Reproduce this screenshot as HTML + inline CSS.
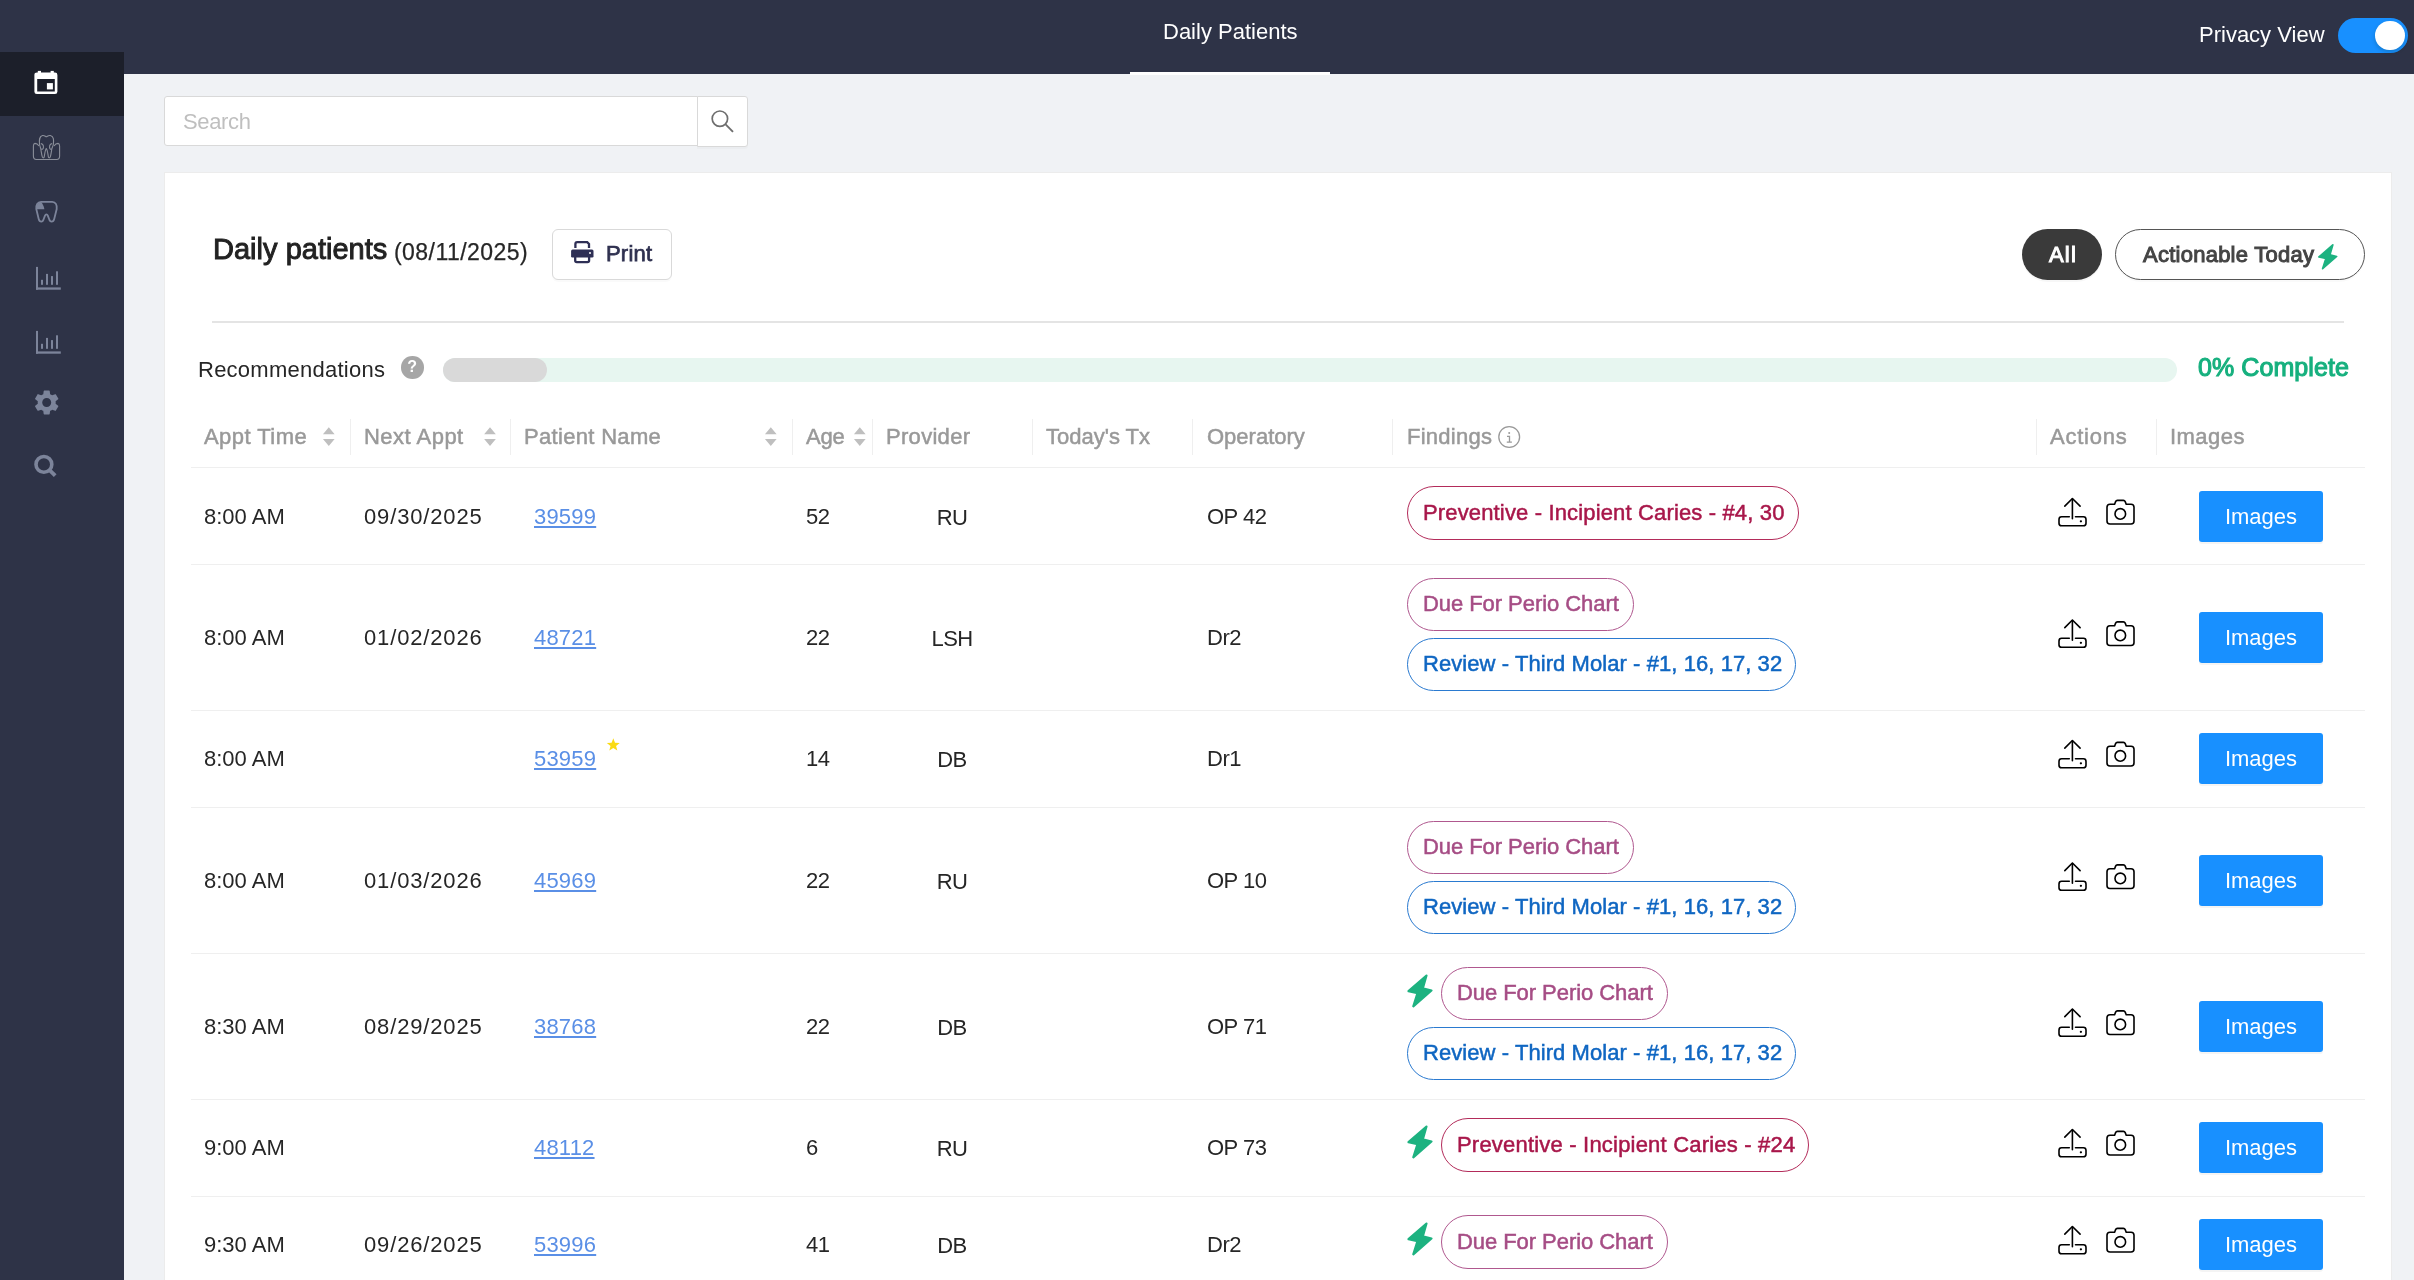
<!DOCTYPE html>
<html><head><meta charset="utf-8"><style>
*{box-sizing:border-box;margin:0;padding:0}
html,body{width:2414px;height:1280px;overflow:hidden}
body{position:relative;background:#f0f2f5;font-family:"Liberation Sans",sans-serif;color:#262626;font-size:22px}
.a{position:absolute}
.t{position:absolute;white-space:nowrap;line-height:1}
#nav{left:0;top:0;width:2414px;height:74px;background:#2e3347}
#side{left:0;top:0;width:124px;height:1280px;background:#2e3347}
#act{left:0;top:52px;width:124px;height:64px;background:#1c1f2a}
#card{left:164px;top:172px;width:2228px;height:1200px;background:#fff;border:1px solid #ececec}
.hdr{color:#999;font-weight:normal;font-size:22px;-webkit-text-stroke:0.5px #999}
.dv{position:absolute;top:419px;width:1px;height:36px;background:#efefef}
.hl{position:absolute;left:191px;width:2174px;height:1px;background:#efefef}
.cell{position:absolute;white-space:nowrap;font-size:22px}
.tag{position:absolute;height:53px;border:1.5px solid;border-radius:27px;font-weight:normal;-webkit-text-stroke:0.5px currentColor;font-size:22px;line-height:50.4px;padding-left:15px;white-space:nowrap}
.prev{color:#a8174a;border-color:#b32b5a}
.perio{color:#a64d85;border-color:#b0588f}
.rev{color:#0f66c2;border-color:#2a7ad0}
.imgbtn{position:absolute;left:2199px;width:124px;height:51px;background:#1890ff;border-radius:3px;color:#fff;font-size:22px;line-height:51px;text-align:center;box-shadow:0 2px 0 rgba(0,0,0,.045)}
.link{color:#5a8fe6;text-decoration:underline;text-underline-offset:2px}
</style></head><body><div id="root" style="position:absolute;left:0;top:0;width:2414px;height:1280px;will-change:transform">
<div id="nav" class="a"></div><div id="side" class="a"></div><div id="act" class="a"></div>
<div class="t" style="left:1163px;top:21px;color:#fff;font-size:22px">Daily Patients</div>
<div class="a" style="left:1130px;top:72px;width:200px;height:3px;background:#fff"></div>
<div class="t" style="left:2199px;top:24px;color:#fff;font-size:22px">Privacy View</div>
<div class="a" style="left:2338px;top:18px;width:70px;height:35px;border-radius:18px;background:#1890ff"></div>
<div class="a" style="left:2375px;top:20.5px;width:29.5px;height:29.5px;border-radius:50%;background:#fff;box-shadow:0 2px 4px rgba(0,35,11,.2)"></div>
<div class="a" style="left:164px;top:96px;width:534px;height:50px;background:#fff;border:1px solid #d9d9d9;border-radius:3px 0 0 3px"></div>
<div class="t" style="left:183px;top:111px;color:#bfbfbf;font-size:22px;letter-spacing:-0.35px">Search</div>
<div class="a" style="left:697px;top:96px;width:51px;height:51px;background:#fff;border:1px solid #d9d9d9;border-radius:0 3px 3px 0;box-shadow:0 2px 0 rgba(0,0,0,.02)"></div>
<div id="card" class="a"></div>
<div class="t" style="left:213px;top:235px;font-size:29px;color:#222;-webkit-text-stroke:0.95px #222;letter-spacing:0.02px">Daily patients</div>
<div class="t" style="left:394px;top:241px;font-size:23px;color:#262626;-webkit-text-stroke:0.25px #262626;letter-spacing:0.45px">(08/11/2025)</div>
<div class="a" style="left:552px;top:229px;width:120px;height:51px;border:1px solid #d9d9d9;border-radius:6px;background:#fff;box-shadow:0 2px 0 rgba(0,0,0,.02)"></div>
<div class="t" style="left:606px;top:243px;font-size:22px;color:#2f3150;-webkit-text-stroke:0.75px #2f3150;letter-spacing:0.2px">Print</div>
<div class="a" style="left:2022px;top:229px;width:80px;height:51px;border-radius:26px;background:#3a3a3a;box-shadow:0 2px 0 rgba(0,0,0,.03)"></div>
<div class="t" style="left:2049px;top:244px;font-size:22px;color:#fff;-webkit-text-stroke:1px #fff;letter-spacing:1.2px">All</div>
<div class="a" style="left:2115px;top:229px;width:250px;height:51px;border-radius:26px;border:1.3px solid #555;background:#fff;box-shadow:0 2px 0 rgba(0,0,0,.02)"></div>
<div class="t" style="left:2143px;top:244px;font-size:22px;color:#444;-webkit-text-stroke:1px #444;letter-spacing:0.25px">Actionable Today</div>
<div class="a" style="left:212px;top:321px;width:2132px;height:2px;background:#e4e4e4"></div>
<div class="t" style="left:198px;top:359px;font-size:22px;color:#262626;letter-spacing:0.25px">Recommendations</div>
<div class="a" style="left:401px;top:356px;width:22.5px;height:22.5px;border-radius:50%;background:#a6a6a6;color:#fff;font-weight:bold;font-size:16px;line-height:22.5px;text-align:center">?</div>
<div class="a" style="left:443px;top:358px;width:1734px;height:24px;border-radius:12px;background:#e7f6f0"></div>
<div class="a" style="left:443px;top:358px;width:104px;height:24px;border-radius:12px;background:#d9d9d9"></div>
<div class="t" style="left:2198px;top:355px;font-size:25px;color:#16b07e;-webkit-text-stroke:1.1px #16b07e;letter-spacing:0.08px">0% Complete</div>
<div class="t hdr" style="left:204px;top:426px;letter-spacing:0.45px">Appt Time</div>
<div class="t hdr" style="left:364px;top:426px;letter-spacing:0.48px">Next Appt</div>
<div class="t hdr" style="left:524px;top:426px;letter-spacing:0.32px">Patient Name</div>
<div class="t hdr" style="left:806px;top:426px;letter-spacing:-0.2px">Age</div>
<div class="t hdr" style="left:886px;top:426px;letter-spacing:0.3px">Provider</div>
<div class="t hdr" style="left:1046px;top:426px;letter-spacing:0px">Today's Tx</div>
<div class="t hdr" style="left:1207px;top:426px;letter-spacing:0px">Operatory</div>
<div class="t hdr" style="left:1407px;top:426px;letter-spacing:0.25px">Findings</div>
<div class="t hdr" style="left:2050px;top:426px;letter-spacing:0.75px">Actions</div>
<div class="t hdr" style="left:2170px;top:426px;letter-spacing:0.46px">Images</div>
<div class="dv" style="left:350px"></div>
<div class="dv" style="left:510px"></div>
<div class="dv" style="left:792px"></div>
<div class="dv" style="left:872px"></div>
<div class="dv" style="left:1032px"></div>
<div class="dv" style="left:1192px"></div>
<div class="dv" style="left:1392px"></div>
<div class="dv" style="left:2036px"></div>
<div class="dv" style="left:2156px"></div>
<div class="hl" style="top:467px"></div>
<div class="a" style="left:0;top:468px;width:2414px;height:97px">
<div class="cell" style="left:204px;top:0;line-height:97px">8:00 AM</div>
<div class="cell" style="left:364px;top:0;line-height:97px;letter-spacing:0.85px">09/30/2025</div>
<div class="cell link" style="left:534px;top:0;line-height:97px;letter-spacing:0.2px">39599</div>
<div class="cell" style="left:806px;top:0;line-height:97px;letter-spacing:-0.5px">52</div>
<div class="cell" style="left:872px;width:160px;text-align:center;top:1px;line-height:97px;letter-spacing:-0.6px">RU</div>
<div class="cell" style="left:1207px;top:0;line-height:97px;letter-spacing:-0.5px">OP 42</div>
</div>
<div class="imgbtn" style="top:491px">Images</div>
<div class="tag prev" style="left:1407px;top:486px;width:392px;height:54px;line-height:51px;letter-spacing:0.15px">Preventive - Incipient Caries - #4, 30</div>
<div class="hl" style="top:564px"></div>
<div class="a" style="left:0;top:565px;width:2414px;height:146px">
<div class="cell" style="left:204px;top:0;line-height:146px">8:00 AM</div>
<div class="cell" style="left:364px;top:0;line-height:146px;letter-spacing:0.85px">01/02/2026</div>
<div class="cell link" style="left:534px;top:0;line-height:146px;letter-spacing:0.2px">48721</div>
<div class="cell" style="left:806px;top:0;line-height:146px;letter-spacing:-0.5px">22</div>
<div class="cell" style="left:872px;width:160px;text-align:center;top:1px;line-height:146px;letter-spacing:-0.6px">LSH</div>
<div class="cell" style="left:1207px;top:0;line-height:146px;letter-spacing:-0.5px">Dr2</div>
</div>
<div class="imgbtn" style="top:612px">Images</div>
<div class="tag perio" style="left:1407px;top:578px;width:227px;height:53px;line-height:50px;letter-spacing:-0.06px">Due For Perio Chart</div>
<div class="tag rev" style="left:1407px;top:638px;width:389px;height:53px;line-height:50px;letter-spacing:0.07px">Review - Third Molar - #1, 16, 17, 32</div>
<div class="hl" style="top:710px"></div>
<div class="a" style="left:0;top:710px;width:2414px;height:97px">
<div class="cell" style="left:204px;top:0;line-height:97px">8:00 AM</div>
<div class="cell link" style="left:534px;top:0;line-height:97px;letter-spacing:0.2px">53959</div>
<div class="cell" style="left:806px;top:0;line-height:97px;letter-spacing:-0.5px">14</div>
<div class="cell" style="left:872px;width:160px;text-align:center;top:1px;line-height:97px;letter-spacing:-0.6px">DB</div>
<div class="cell" style="left:1207px;top:0;line-height:97px;letter-spacing:-0.5px">Dr1</div>
</div>
<div class="imgbtn" style="top:733px">Images</div>
<div class="hl" style="top:807px"></div>
<div class="a" style="left:0;top:808px;width:2414px;height:146px">
<div class="cell" style="left:204px;top:0;line-height:146px">8:00 AM</div>
<div class="cell" style="left:364px;top:0;line-height:146px;letter-spacing:0.85px">01/03/2026</div>
<div class="cell link" style="left:534px;top:0;line-height:146px;letter-spacing:0.2px">45969</div>
<div class="cell" style="left:806px;top:0;line-height:146px;letter-spacing:-0.5px">22</div>
<div class="cell" style="left:872px;width:160px;text-align:center;top:1px;line-height:146px;letter-spacing:-0.6px">RU</div>
<div class="cell" style="left:1207px;top:0;line-height:146px;letter-spacing:-0.5px">OP 10</div>
</div>
<div class="imgbtn" style="top:855px">Images</div>
<div class="tag perio" style="left:1407px;top:821px;width:227px;height:53px;line-height:50px;letter-spacing:-0.06px">Due For Perio Chart</div>
<div class="tag rev" style="left:1407px;top:881px;width:389px;height:53px;line-height:50px;letter-spacing:0.07px">Review - Third Molar - #1, 16, 17, 32</div>
<div class="hl" style="top:953px"></div>
<div class="a" style="left:0;top:954px;width:2414px;height:146px">
<div class="cell" style="left:204px;top:0;line-height:146px">8:30 AM</div>
<div class="cell" style="left:364px;top:0;line-height:146px;letter-spacing:0.85px">08/29/2025</div>
<div class="cell link" style="left:534px;top:0;line-height:146px;letter-spacing:0.2px">38768</div>
<div class="cell" style="left:806px;top:0;line-height:146px;letter-spacing:-0.5px">22</div>
<div class="cell" style="left:872px;width:160px;text-align:center;top:1px;line-height:146px;letter-spacing:-0.6px">DB</div>
<div class="cell" style="left:1207px;top:0;line-height:146px;letter-spacing:-0.5px">OP 71</div>
</div>
<div class="imgbtn" style="top:1001px">Images</div>
<div class="tag perio" style="left:1441px;top:967px;width:227px;height:53px;line-height:50px;letter-spacing:-0.06px">Due For Perio Chart</div>
<div class="tag rev" style="left:1407px;top:1027px;width:389px;height:53px;line-height:50px;letter-spacing:0.07px">Review - Third Molar - #1, 16, 17, 32</div>
<div class="hl" style="top:1099px"></div>
<div class="a" style="left:0;top:1099px;width:2414px;height:97px">
<div class="cell" style="left:204px;top:0;line-height:97px">9:00 AM</div>
<div class="cell link" style="left:534px;top:0;line-height:97px;letter-spacing:0.2px">48112</div>
<div class="cell" style="left:806px;top:0;line-height:97px;letter-spacing:-0.5px">6</div>
<div class="cell" style="left:872px;width:160px;text-align:center;top:1px;line-height:97px;letter-spacing:-0.6px">RU</div>
<div class="cell" style="left:1207px;top:0;line-height:97px;letter-spacing:-0.5px">OP 73</div>
</div>
<div class="imgbtn" style="top:1122px">Images</div>
<div class="tag prev" style="left:1441px;top:1118px;width:368px;height:54px;line-height:51px;letter-spacing:0.2px">Preventive - Incipient Caries - #24</div>
<div class="hl" style="top:1196px"></div>
<div class="a" style="left:0;top:1196px;width:2414px;height:97px">
<div class="cell" style="left:204px;top:0;line-height:97px">9:30 AM</div>
<div class="cell" style="left:364px;top:0;line-height:97px;letter-spacing:0.85px">09/26/2025</div>
<div class="cell link" style="left:534px;top:0;line-height:97px;letter-spacing:0.2px">53996</div>
<div class="cell" style="left:806px;top:0;line-height:97px;letter-spacing:-0.5px">41</div>
<div class="cell" style="left:872px;width:160px;text-align:center;top:1px;line-height:97px;letter-spacing:-0.6px">DB</div>
<div class="cell" style="left:1207px;top:0;line-height:97px;letter-spacing:-0.5px">Dr2</div>
</div>
<div class="imgbtn" style="top:1219px">Images</div>
<div class="tag perio" style="left:1441px;top:1215px;width:227px;height:54px;line-height:51px;letter-spacing:-0.06px">Due For Perio Chart</div>
<div class="hl" style="top:1293px"></div>
<svg class="a" style="left:0;top:0" width="2414" height="1280" viewBox="0 0 2414 1280">
<g transform="translate(0,0.00)" fill="none" stroke="#000" stroke-width="1.6" stroke-linecap="round" stroke-linejoin="round"><path d="M2064.8,506.1 L2072.4,498.5 L2080.1,506.1"/><path d="M2072.4,499 V518.8"/><path d="M2069.3,516.8 H2061.6 Q2059,516.8 2059,519.4 V523.2 Q2059,525.8 2061.6,525.8 H2083.4 Q2086,525.8 2086,523.2 V519.4 Q2086,516.8 2083.4,516.8 H2075.5"/></g><circle cx="2080.9" cy="521.30" r="1.15" fill="#000"/>
<g transform="translate(0,0.00)" fill="none" stroke="#000" stroke-width="1.6" stroke-linejoin="round"><path d="M2110,504.2 H2114.6 L2115.6,501.6 Q2116.1,500.4 2117.4,500.4 H2123.4 Q2124.7,500.4 2125.2,501.6 L2126.2,504.2 H2131 Q2134,504.2 2134,507.2 V521 Q2134,524 2131,524 H2110 Q2107,524 2107,521 V507.2 Q2107,504.2 2110,504.2 Z"/><circle cx="2120.3" cy="513.9" r="5.3"/></g>
<g transform="translate(0,121.50)" fill="none" stroke="#000" stroke-width="1.6" stroke-linecap="round" stroke-linejoin="round"><path d="M2064.8,506.1 L2072.4,498.5 L2080.1,506.1"/><path d="M2072.4,499 V518.8"/><path d="M2069.3,516.8 H2061.6 Q2059,516.8 2059,519.4 V523.2 Q2059,525.8 2061.6,525.8 H2083.4 Q2086,525.8 2086,523.2 V519.4 Q2086,516.8 2083.4,516.8 H2075.5"/></g><circle cx="2080.9" cy="642.80" r="1.15" fill="#000"/>
<g transform="translate(0,121.50)" fill="none" stroke="#000" stroke-width="1.6" stroke-linejoin="round"><path d="M2110,504.2 H2114.6 L2115.6,501.6 Q2116.1,500.4 2117.4,500.4 H2123.4 Q2124.7,500.4 2125.2,501.6 L2126.2,504.2 H2131 Q2134,504.2 2134,507.2 V521 Q2134,524 2131,524 H2110 Q2107,524 2107,521 V507.2 Q2107,504.2 2110,504.2 Z"/><circle cx="2120.3" cy="513.9" r="5.3"/></g>
<g transform="translate(0,242.00)" fill="none" stroke="#000" stroke-width="1.6" stroke-linecap="round" stroke-linejoin="round"><path d="M2064.8,506.1 L2072.4,498.5 L2080.1,506.1"/><path d="M2072.4,499 V518.8"/><path d="M2069.3,516.8 H2061.6 Q2059,516.8 2059,519.4 V523.2 Q2059,525.8 2061.6,525.8 H2083.4 Q2086,525.8 2086,523.2 V519.4 Q2086,516.8 2083.4,516.8 H2075.5"/></g><circle cx="2080.9" cy="763.30" r="1.15" fill="#000"/>
<g transform="translate(0,242.00)" fill="none" stroke="#000" stroke-width="1.6" stroke-linejoin="round"><path d="M2110,504.2 H2114.6 L2115.6,501.6 Q2116.1,500.4 2117.4,500.4 H2123.4 Q2124.7,500.4 2125.2,501.6 L2126.2,504.2 H2131 Q2134,504.2 2134,507.2 V521 Q2134,524 2131,524 H2110 Q2107,524 2107,521 V507.2 Q2107,504.2 2110,504.2 Z"/><circle cx="2120.3" cy="513.9" r="5.3"/></g>
<g transform="translate(0,364.50)" fill="none" stroke="#000" stroke-width="1.6" stroke-linecap="round" stroke-linejoin="round"><path d="M2064.8,506.1 L2072.4,498.5 L2080.1,506.1"/><path d="M2072.4,499 V518.8"/><path d="M2069.3,516.8 H2061.6 Q2059,516.8 2059,519.4 V523.2 Q2059,525.8 2061.6,525.8 H2083.4 Q2086,525.8 2086,523.2 V519.4 Q2086,516.8 2083.4,516.8 H2075.5"/></g><circle cx="2080.9" cy="885.80" r="1.15" fill="#000"/>
<g transform="translate(0,364.50)" fill="none" stroke="#000" stroke-width="1.6" stroke-linejoin="round"><path d="M2110,504.2 H2114.6 L2115.6,501.6 Q2116.1,500.4 2117.4,500.4 H2123.4 Q2124.7,500.4 2125.2,501.6 L2126.2,504.2 H2131 Q2134,504.2 2134,507.2 V521 Q2134,524 2131,524 H2110 Q2107,524 2107,521 V507.2 Q2107,504.2 2110,504.2 Z"/><circle cx="2120.3" cy="513.9" r="5.3"/></g>
<path d="M1426.50,975.50 L1408.50,991.20 L1417.50,993.20 L1413.30,1006.30 L1431.50,990.50 L1422.80,988.40Z" fill="#1db280" stroke="#1db280" stroke-width="2.20" stroke-linejoin="round"/>
<g transform="translate(0,510.50)" fill="none" stroke="#000" stroke-width="1.6" stroke-linecap="round" stroke-linejoin="round"><path d="M2064.8,506.1 L2072.4,498.5 L2080.1,506.1"/><path d="M2072.4,499 V518.8"/><path d="M2069.3,516.8 H2061.6 Q2059,516.8 2059,519.4 V523.2 Q2059,525.8 2061.6,525.8 H2083.4 Q2086,525.8 2086,523.2 V519.4 Q2086,516.8 2083.4,516.8 H2075.5"/></g><circle cx="2080.9" cy="1031.80" r="1.15" fill="#000"/>
<g transform="translate(0,510.50)" fill="none" stroke="#000" stroke-width="1.6" stroke-linejoin="round"><path d="M2110,504.2 H2114.6 L2115.6,501.6 Q2116.1,500.4 2117.4,500.4 H2123.4 Q2124.7,500.4 2125.2,501.6 L2126.2,504.2 H2131 Q2134,504.2 2134,507.2 V521 Q2134,524 2131,524 H2110 Q2107,524 2107,521 V507.2 Q2107,504.2 2110,504.2 Z"/><circle cx="2120.3" cy="513.9" r="5.3"/></g>
<path d="M1426.50,1126.50 L1408.50,1142.20 L1417.50,1144.20 L1413.30,1157.30 L1431.50,1141.50 L1422.80,1139.40Z" fill="#1db280" stroke="#1db280" stroke-width="2.20" stroke-linejoin="round"/>
<g transform="translate(0,631.00)" fill="none" stroke="#000" stroke-width="1.6" stroke-linecap="round" stroke-linejoin="round"><path d="M2064.8,506.1 L2072.4,498.5 L2080.1,506.1"/><path d="M2072.4,499 V518.8"/><path d="M2069.3,516.8 H2061.6 Q2059,516.8 2059,519.4 V523.2 Q2059,525.8 2061.6,525.8 H2083.4 Q2086,525.8 2086,523.2 V519.4 Q2086,516.8 2083.4,516.8 H2075.5"/></g><circle cx="2080.9" cy="1152.30" r="1.15" fill="#000"/>
<g transform="translate(0,631.00)" fill="none" stroke="#000" stroke-width="1.6" stroke-linejoin="round"><path d="M2110,504.2 H2114.6 L2115.6,501.6 Q2116.1,500.4 2117.4,500.4 H2123.4 Q2124.7,500.4 2125.2,501.6 L2126.2,504.2 H2131 Q2134,504.2 2134,507.2 V521 Q2134,524 2131,524 H2110 Q2107,524 2107,521 V507.2 Q2107,504.2 2110,504.2 Z"/><circle cx="2120.3" cy="513.9" r="5.3"/></g>
<path d="M1426.50,1223.50 L1408.50,1239.20 L1417.50,1241.20 L1413.30,1254.30 L1431.50,1238.50 L1422.80,1236.40Z" fill="#1db280" stroke="#1db280" stroke-width="2.20" stroke-linejoin="round"/>
<g transform="translate(0,728.00)" fill="none" stroke="#000" stroke-width="1.6" stroke-linecap="round" stroke-linejoin="round"><path d="M2064.8,506.1 L2072.4,498.5 L2080.1,506.1"/><path d="M2072.4,499 V518.8"/><path d="M2069.3,516.8 H2061.6 Q2059,516.8 2059,519.4 V523.2 Q2059,525.8 2061.6,525.8 H2083.4 Q2086,525.8 2086,523.2 V519.4 Q2086,516.8 2083.4,516.8 H2075.5"/></g><circle cx="2080.9" cy="1249.30" r="1.15" fill="#000"/>
<g transform="translate(0,728.00)" fill="none" stroke="#000" stroke-width="1.6" stroke-linejoin="round"><path d="M2110,504.2 H2114.6 L2115.6,501.6 Q2116.1,500.4 2117.4,500.4 H2123.4 Q2124.7,500.4 2125.2,501.6 L2126.2,504.2 H2131 Q2134,504.2 2134,507.2 V521 Q2134,524 2131,524 H2110 Q2107,524 2107,521 V507.2 Q2107,504.2 2110,504.2 Z"/><circle cx="2120.3" cy="513.9" r="5.3"/></g>
<polygon points="613.30,738.20 615.00,742.65 619.77,742.90 616.06,745.90 617.30,750.50 613.30,747.90 609.30,750.50 610.54,745.90 606.83,742.90 611.60,742.65" fill="#fadb14"/>
<path d="M2332.78,244.93 L2318.93,257.01 L2325.86,258.55 L2322.62,268.64 L2336.64,256.48 L2329.94,254.86Z" fill="#1db280" stroke="#1db280" stroke-width="1.69" stroke-linejoin="round"/>
<path d="M328.8,427.3 L334.65000000000003,434.3 L322.95,434.3Z M322.95,438.9 L334.65000000000003,438.9 L328.8,446Z" fill="#bfbfbf"/>
<path d="M490,427.3 L495.85,434.3 L484.15,434.3Z M484.15,438.9 L495.85,438.9 L490,446Z" fill="#bfbfbf"/>
<path d="M770.8,427.3 L776.65,434.3 L764.9499999999999,434.3Z M764.9499999999999,438.9 L776.65,438.9 L770.8,446Z" fill="#bfbfbf"/>
<path d="M859.8,427.3 L865.65,434.3 L853.9499999999999,434.3Z M853.9499999999999,438.9 L865.65,438.9 L859.8,446Z" fill="#bfbfbf"/>
<circle cx="1509.2" cy="437" r="10.4" fill="none" stroke="#999" stroke-width="1.3"/><circle cx="1509.2" cy="432.9" r="1" fill="#999"/><path d="M1507,436.3 H1509.5 V442.2 M1506.8,442.2 H1511.9" fill="none" stroke="#999" stroke-width="1.3"/>
<circle cx="719.9" cy="118.7" r="7.7" fill="none" stroke="#6e6e6e" stroke-width="1.7"/><path d="M725.6,124.4 L733,131.8" stroke="#6e6e6e" stroke-width="1.9"/>
<path d="M575.4,248 V244 Q575.4,242.2 577.2,242.2 H587.2 L589,244 V248" fill="none" stroke="#2e2f55" stroke-width="2.3"/><path d="M572.6,249.6 H592 Q593.5,249.6 593.5,251.1 V256.2 Q593.5,257.5 592.2,257.5 H572.4 Q571.1,257.5 571.1,256.2 V251.1 Q571.1,249.6 572.6,249.6Z" fill="#2e2f55"/><circle cx="590" cy="253" r="1" fill="#fff"/><path d="M575.2,255.5 V260.5 Q575.2,262.1 576.8,262.1 H587.5 Q589.1,262.1 589.1,260.5 V255.5" fill="none" stroke="#2e2f55" stroke-width="2.3"/>
<path d="M37,72.6 H55 Q57.4,72.6 57.4,75 V91.7 Q57.4,94.1 55,94.1 H36.8 Q34.4,94.1 34.4,91.7 V75 Q34.4,72.6 37,72.6Z M37.2,79.1 V91.5 H54.8 V79.1Z" fill="#fff" fill-rule="evenodd"/><rect x="46.9" y="83.1" width="6" height="6.3" fill="#fff"/><rect x="37.8" y="70.9" width="3.2" height="3" fill="#fff"/><rect x="50.6" y="70.9" width="3.2" height="3" fill="#fff"/>
<g fill="none" stroke="#8a8e99" stroke-width="1.1" stroke-linejoin="round"><path d="M39.5,144 C39.2,140 39,136.5 42.5,135.5 C44.5,135 45.5,136.8 46.3,136.8 C47.2,136.8 48.2,135 50.4,135.5 C54,136.5 53.7,140 53.4,144 C53.2,146 52,147.5 51.8,149 C51.3,152 51,155 50.2,157 C49.6,158.2 48.6,158 48.4,157 C47.8,154 47.6,150 46.3,148.5 C45,150 44.8,154 44.2,157 C44,158 43,158.2 42.4,157 C41.6,155 41.3,152 40.8,149 C40.6,147.5 39.7,146 39.5,144Z"/><path d="M40.8,143.6 C42.5,143.9 43.6,145.6 43.4,147.6 C43.2,149.3 41.8,149.7 41.2,148.7"/><path d="M52.2,143.6 C50.5,143.9 49.4,145.6 49.6,147.6 C49.8,149.3 51.2,149.7 51.8,148.7"/><path d="M39,146 C38,144.5 36.5,143.4 35,143.4 C33.8,143.6 33.4,144.5 33.4,146 V156 C33.4,158 34.5,159.5 36.3,159.5 H56.7 C58.5,159.5 59.6,158 59.6,156 V146 C59.6,144.5 59.2,143.6 58,143.4 C56.5,143.4 55,144.5 54,146"/></g>
<path d="M41,201.8 L52.3,201.8 C55.6,201.8 57.2,205 56.7,209 L54.2,219 C53.7,221 52.9,221.6 51.6,221.6 C50.3,221.6 49.6,220.6 49.1,219 L47.8,215.6 C47.4,214.6 46.9,214.3 46.4,214.3 C45.9,214.3 45.4,214.6 45,215.6 L43.7,219 C43.2,220.6 42.6,221.6 41.3,221.6 C40,221.6 39.2,221 38.7,219 L36.3,209 C35.8,205 37.6,201.8 41,201.8Z" fill="none" stroke="#7c849a" stroke-width="1.8" stroke-linejoin="round"/><path d="M36.2,209.2 L44.4,209.2 C43.7,205.8 42.6,203.5 41,202 C38,202.3 36.3,205.5 36.2,209.2Z" fill="#7c849a"/>
<g fill="#7c849a"><rect x="36" y="266.9" width="2" height="22.8"/><rect x="36" y="287.4" width="24.8" height="2.3"/><rect x="41" y="279.8" width="2" height="5"/><rect x="46" y="273.9" width="2" height="10.9"/><rect x="51" y="276.1" width="2" height="8.7"/><rect x="56" y="271.3" width="2" height="13.5"/></g>
<g fill="#7c849a"><rect x="36" y="330.9" width="2" height="22.8"/><rect x="36" y="351.4" width="24.8" height="2.3"/><rect x="41" y="343.8" width="2" height="5"/><rect x="46" y="337.9" width="2" height="10.9"/><rect x="51" y="340.1" width="2" height="8.7"/><rect x="56" y="335.3" width="2" height="13.5"/></g>
<g transform="translate(31.7,387.5) scale(1.25)"><path fill="#7c849a" d="M19.14 12.94c.04-.3.06-.61.06-.94 0-.32-.02-.64-.07-.94l2.03-1.58c.18-.14.23-.41.12-.61l-1.92-3.32c-.12-.22-.37-.29-.59-.22l-2.39.96c-.5-.38-1.03-.7-1.62-.94l-.36-2.54c-.04-.24-.24-.41-.48-.41h-3.84c-.24 0-.43.17-.47.41l-.36 2.54c-.59.24-1.13.57-1.62.94l-2.39-.96c-.22-.08-.47 0-.59.22L2.74 8.87c-.12.21-.08.47.12.61l2.03 1.58c-.05.3-.09.63-.09.94s.02.64.07.94l-2.03 1.58c-.18.14-.23.41-.12.61l1.92 3.32c.12.22.37.29.59.22l2.39-.96c.5.38 1.03.7 1.62.94l.36 2.54c.05.24.24.41.48.41h3.84c.24 0 .44-.17.47-.41l.36-2.54c.59-.24 1.13-.56 1.62-.94l2.39.96c.22.08.47 0 .59-.22l1.92-3.32c.12-.22.07-.47-.12-.61l-2.01-1.58zM12 15.6c-1.98 0-3.6-1.62-3.6-3.6s1.62-3.6 3.6-3.6 3.6 1.62 3.6 3.6-1.62 3.6-3.6 3.6z"/></g>
<circle cx="43.9" cy="464.4" r="7.9" fill="none" stroke="#7c849a" stroke-width="3.6"/><path d="M49.8,470.3 L55.2,475.7" stroke="#7c849a" stroke-width="3.8"/>
</svg>
</div></body></html>
